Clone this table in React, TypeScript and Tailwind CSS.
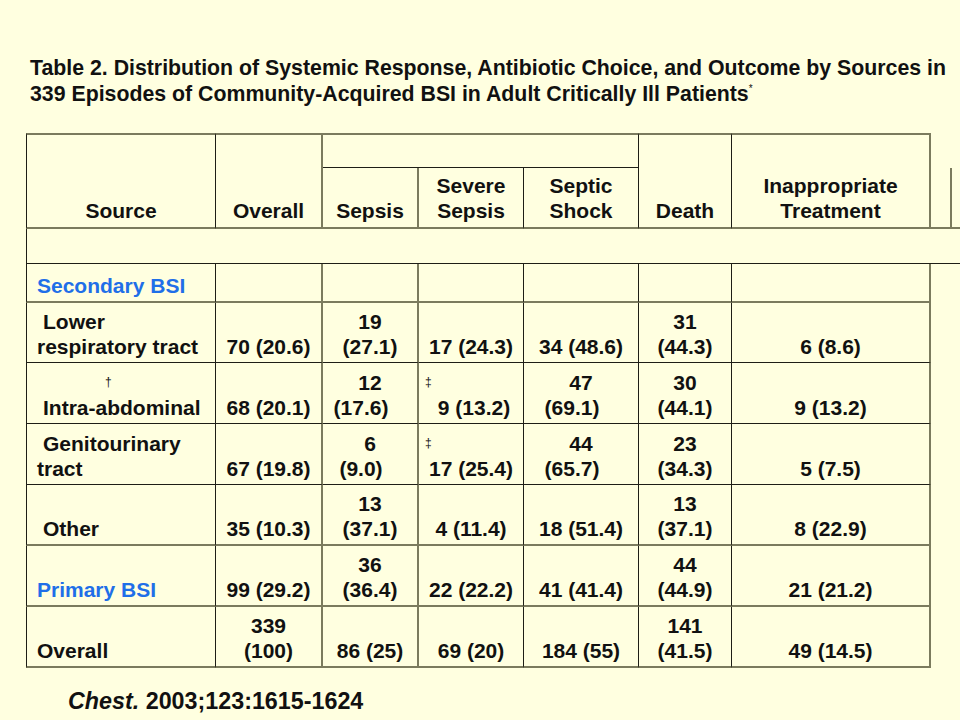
import React from "react";

const R = [
  "border-r border-r-[#1e1e16]",
  "border-r-2 border-r-[#7b7b5e]",
  "border-r-2 border-r-[#7b7b5e]",
  "border-r border-r-[#1e1e16]",
  "border-r border-r-[#1e1e16]",
  "border-r border-r-[#1e1e16]",
  "border-r-2 border-r-[#7b7b5e]",
];
const BD = "border-b border-b-[#1e1e16]";
const BO = "border-b-2 border-b-[#7b7b5e]";
const LEFT = "border-l border-l-[#1e1e16]";

type Line = { t: string; cls?: string };
type CellV = string | Line[];

function Cell({
  v,
  col,
  bottom,
}: {
  v: CellV;
  col: number;
  bottom: string;
}) {
  const lines: Line[] = typeof v === "string" ? [{ t: v }] : v;
  const first = col === 0;
  return (
    <div
      className={`flex flex-col justify-end pb-[3px] ${R[col]} ${bottom} ${
        first ? LEFT + " items-start pl-[10px]" : "items-center text-center"
      }`}
    >
      {lines.map((l, i) => (
        <div key={i} className={`whitespace-nowrap ${l.cls ?? ""}`}>
          {l.t}
        </div>
      ))}
    </div>
  );
}

const dagger = "h-[25px] text-[12px] font-normal leading-[25px]";

const rows: { cells: CellV[]; bottom: string }[] = [
  {
    cells: [
      [{ t: "Secondary BSI", cls: "text-[#1f6fe8]" }],
      "",
      "",
      "",
      "",
      "",
      "",
    ],
    bottom: BO,
  },
  {
    cells: [
      [{ t: "Lower", cls: "pl-[6px]" }, { t: "respiratory tract" }],
      "70 (20.6)",
      [{ t: "19" }, { t: "(27.1)" }],
      "17 (24.3)",
      "34 (48.6)",
      [{ t: "31" }, { t: "(44.3)" }],
      "6 (8.6)",
    ],
    bottom: BD,
  },
  {
    cells: [
      [
        { t: "†", cls: dagger + " pl-[68px]" },
        { t: "Intra-abdominal", cls: "pl-[6px]" },
      ],
      "68 (20.1)",
      [{ t: "12" }, { t: "(17.6)", cls: "pr-[18px]" }],
      [
        { t: "‡", cls: dagger + " self-start pl-[6px]" },
        { t: "9 (13.2)", cls: "pl-[6px]" },
      ],
      [{ t: "47" }, { t: "(69.1)", cls: "pr-[18px]" }],
      [{ t: "30" }, { t: "(44.1)" }],
      "9 (13.2)",
    ],
    bottom: BD,
  },
  {
    cells: [
      [{ t: "Genitourinary", cls: "pl-[6px]" }, { t: "tract" }],
      "67 (19.8)",
      [{ t: "6" }, { t: "(9.0)", cls: "pr-[18px]" }],
      [
        { t: "‡", cls: dagger + " self-start pl-[6px]" },
        { t: "17 (25.4)" },
      ],
      [{ t: "44" }, { t: "(65.7)", cls: "pr-[18px]" }],
      [{ t: "23" }, { t: "(34.3)" }],
      "5 (7.5)",
    ],
    bottom: BD,
  },
  {
    cells: [
      [{ t: "Other", cls: "pl-[6px]" }],
      "35 (10.3)",
      [{ t: "13" }, { t: "(37.1)" }],
      "4 (11.4)",
      "18 (51.4)",
      [{ t: "13" }, { t: "(37.1)" }],
      "8 (22.9)",
    ],
    bottom: BO,
  },
  {
    cells: [
      [{ t: "Primary BSI", cls: "text-[#1f6fe8]" }],
      "99 (29.2)",
      [{ t: "36" }, { t: "(36.4)" }],
      "22 (22.2)",
      "41 (41.4)",
      [{ t: "44" }, { t: "(44.9)" }],
      "21 (21.2)",
    ],
    bottom: BO,
  },
  {
    cells: [
      "Overall",
      [{ t: "339" }, { t: "(100)" }],
      "86 (25)",
      "69 (20)",
      "184 (55)",
      [{ t: "141" }, { t: "(41.5)" }],
      "49 (14.5)",
    ],
    bottom: BO,
  },
];

const HT = "border-t-2 border-t-[#7b7b5e]";
const hcell = "flex flex-col justify-end items-center text-center pb-[4px]";

export default function App() {
  return (
    <div
      className="w-[960px] h-[720px] bg-[#ffffe0] text-[#111111] overflow-hidden"
      style={{ fontFamily: '"Liberation Sans", Arial, sans-serif' }}
    >
      <div className="pl-[30px] pt-[55px] text-[21.3px] leading-[26px] font-bold whitespace-nowrap">
        <div className="h-[26px]">
          Table 2. Distribution of Systemic Response, Antibiotic Choice, and
          Outcome by Sources in
        </div>
        <div className="h-[26px]">
          339 Episodes of Community-Acquired BSI in Adult Critically Ill
          Patients
          <span className="relative -top-[9px] text-[10px] leading-none font-normal align-baseline">
            *
          </span>
        </div>
      </div>

      <div className="ml-[26px] mt-[26px] grid grid-cols-[190px_107px_96px_105px_115px_93px_199px_21px_8px] grid-rows-[35px_61px_35px_39px_60px_61px_61px_61px_61px_61px] text-[21px] leading-[25px] font-bold">
        {/* header */}
        <div className={`row-span-2 ${hcell} ${LEFT} ${HT} ${R[0]} ${BO}`}>
          Source
        </div>
        <div className={`row-span-2 ${hcell} ${HT} ${R[1]} ${BO}`}>
          Overall
        </div>
        <div className={`col-span-3 ${HT} ${BD} ${R[5]}`} />
        <div className={`row-span-2 ${hcell} ${HT} ${R[5]} ${BO}`}>Death</div>
        <div className={`row-span-2 ${hcell} ${HT} ${R[6]} ${BO}`}>
          <div>Inappropriate</div>
          <div>Treatment</div>
        </div>
        <div />
        <div />
        <div className={`${hcell} ${R[2]} ${BO}`}>Sepsis</div>
        <div className={`${hcell} ${R[3]} ${BO}`}>
          <div>Severe</div>
          <div>Sepsis</div>
        </div>
        <div className={`${hcell} ${R[4]} ${BO}`}>
          <div>Septic</div>
          <div>Shock</div>
        </div>
        <div className={`border-r-2 border-r-[#7b7b5e] ${BO}`} />
        <div className={BO} />

        {/* blank row */}
        <div className={`col-span-9 ${LEFT} ${BD}`} />

        {rows.map((r, ri) => (
          <React.Fragment key={ri}>
            {r.cells.map((c, ci) => (
              <Cell key={ci} v={c} col={ci} bottom={r.bottom} />
            ))}
            <div />
            <div />
          </React.Fragment>
        ))}
      </div>

      <div className="pl-[68px] mt-[20px] text-[23.3px] leading-[26px] font-bold whitespace-nowrap">
        <span className="italic">Chest.</span> 2003;123:1615-1624
      </div>
    </div>
  );
}
